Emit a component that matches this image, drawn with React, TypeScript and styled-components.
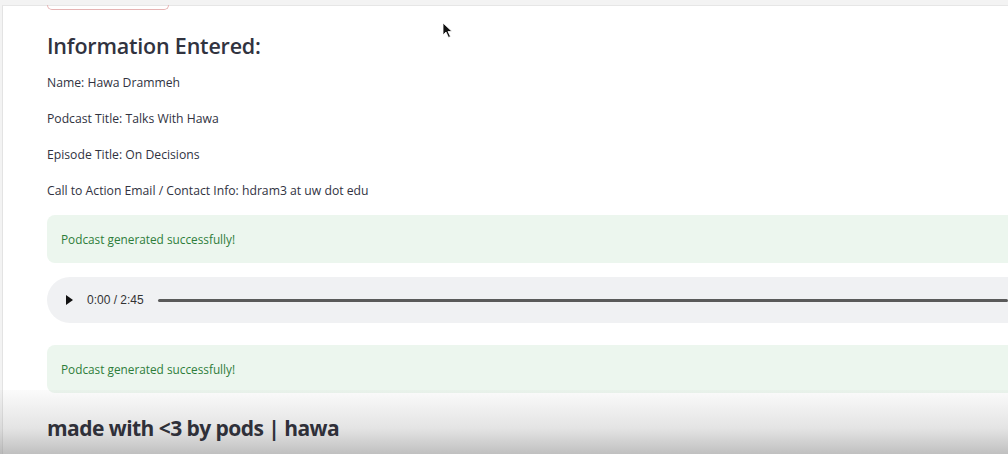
import React from "react";
import styled, { createGlobalStyle } from "styled-components";

const Global = createGlobalStyle`
  html, body { margin: 0; padding: 0; background: #f3f3f3; }
  body { width: 1008px; height: 454px; overflow: hidden; font-family: "Open Sans", sans-serif; }
`;

const Frame = styled.div`
  position: relative;
  width: 1008px;
  height: 454px;
  overflow: hidden;
  background: #f3f3f3;
  padding: 5px 0 0 2px;
  box-sizing: border-box;
`;

const Card = styled.div`
  background: #ffffff;
  border-left: 1px solid #e3e3e3;
  border-top: 1px solid #e6e6e6;
  height: 100%;
  padding: 0 0 0 44px;
  box-sizing: border-box;
  display: flex;
  flex-direction: column;
`;

const CutButton = styled.div`
  width: 120px;
  height: 4px;
  border: 1px solid #e6b4b4;
  border-top: none;
  border-radius: 0 0 6px 6px;
  margin-top: -1px;
`;

const Heading = styled.h2`
  margin: 21px 0 0 0;
  font-family: "Open Sans", sans-serif;
  font-weight: 600;
  font-size: 21.5px;
  line-height: 30px;
  color: #31333f;
  letter-spacing: -0.2px;
`;

const Info = styled.p<{ $mt: number }>`
  margin: 0;
  font-family: "Open Sans", sans-serif;
  font-size: 12.2px;
  line-height: 16px;
  color: #31333f;
  margin-top: ${(p) => p.$mt}px;
`;

const Success = styled.div<{ $mt: number }>`
  margin-top: ${(p) => p.$mt}px;
  height: 48px;
  background: #ecf6ee;
  border-radius: 8px 0 0 8px;
  display: flex;
  align-items: center;
  padding-left: 14px;
  font-family: "Open Sans", sans-serif;
  font-size: 11.8px;
  color: #2e7d3a;
`;

const Audio = styled.div`
  margin-top: 14px;
  height: 46px;
  background: #f0f1f3;
  border-radius: 23px 0 0 23px;
  display: flex;
  align-items: center;
  padding-left: 19px;
`;

const Time = styled.span`
  font-family: "Liberation Sans", Arial, sans-serif;
  font-size: 12px;
  color: #333;
  margin-left: 14px;
`;

const Track = styled.div`
  flex: 1;
  height: 3px;
  background: #5a5a5a;
  border-radius: 2px;
  margin-left: 14px;
`;

const Footer = styled.h2`
  margin: 20px 0 0 0;
  font-family: "Open Sans", sans-serif;
  font-weight: 700;
  font-size: 21px;
  line-height: 30px;
  color: #2f3039;
  letter-spacing: -0.55px;
  position: relative;
  z-index: 2;
`;

const Vignette = styled.div`
  position: absolute;
  left: 0;
  right: 0;
  bottom: 0;
  height: 64px;
  background: linear-gradient(to bottom, rgba(150,150,150,0.04), rgba(150,150,150,0.26) 60%, rgba(140,140,140,0.55));
  pointer-events: none;
  z-index: 1;
`;

const Cursor = styled.svg`
  position: absolute;
  left: 442px;
  top: 22px;
  z-index: 3;
`;

export default function App() {
  return (
    <>
      <Global />
      <Frame>
        <Card>
          <CutButton />
          <Heading>Information Entered:</Heading>
          <Info $mt={14}>Name: Hawa Drammeh</Info>
          <Info $mt={20}>Podcast Title: Talks With Hawa</Info>
          <Info $mt={20}>Episode Title: On Decisions</Info>
          <Info $mt={20}>Call to Action Email / Contact Info: hdram3 at uw dot edu</Info>
          <Success $mt={16}>Podcast generated successfully!</Success>
          <Audio>
            <svg width="7" height="10" viewBox="0 0 7 10">
              <path d="M0 0 L7 5 L0 10 Z" fill="#111" />
            </svg>
            <Time>0:00 / 2:45</Time>
            <Track />
          </Audio>
          <Success $mt={22}>Podcast generated successfully!</Success>
          <Footer>made with &lt;3 by pods | hawa</Footer>
        </Card>
        <Vignette />
        <Cursor width="12" height="17" viewBox="0 0 12 17">
          <path d="M1 1 L1 13 L4 10 L6.5 15.5 L8.5 14.5 L6 9.5 L10 9.5 Z" fill="#111" stroke="#fff" strokeWidth="0.8" />
        </Cursor>
      </Frame>
    </>
  );
}
